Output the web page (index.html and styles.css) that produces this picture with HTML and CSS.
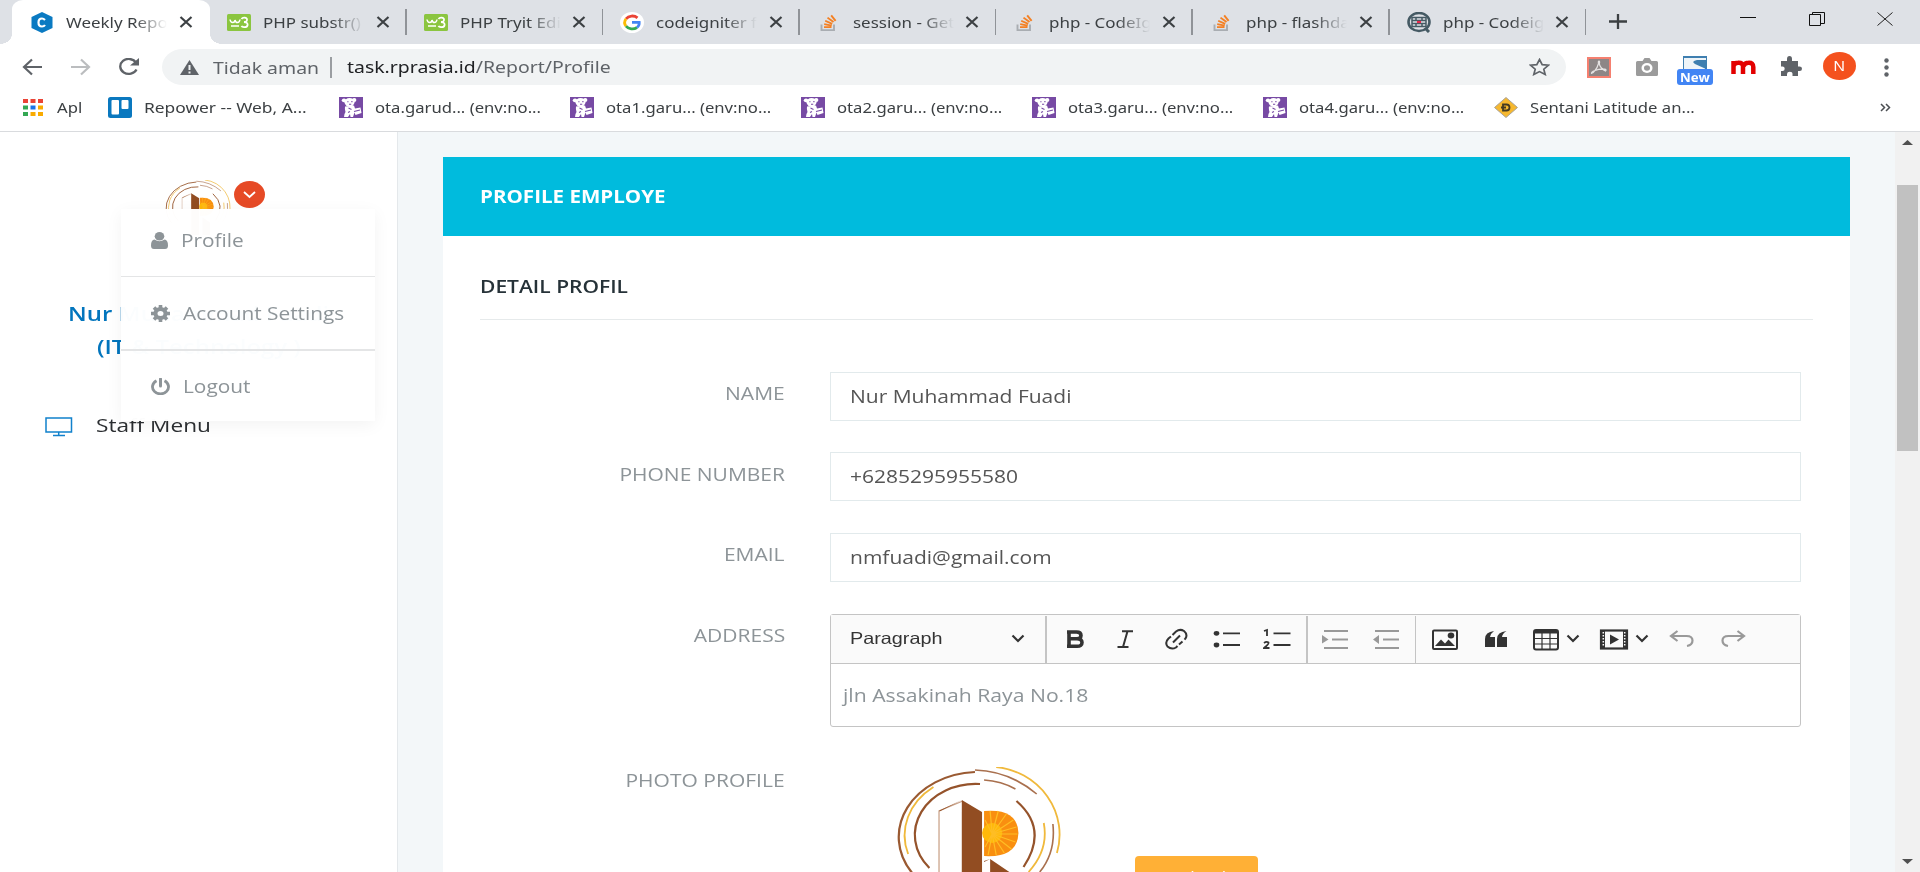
FILE: index.html
```html
<!DOCTYPE html>
<html lang="id">
<head>
<meta charset="utf-8">
<title>Weekly Report</title>
<link rel="stylesheet" href="styles.css">
</head>
<body>
<svg class="defs" width="0" height="0">
  <symbol id="x" viewBox="0 0 14 12" preserveAspectRatio="none"><path d="M1.500 1l11 10M12.500 1l-11 10" stroke="#3c4043" stroke-width="2.200" fill="none"/></symbol>
  <symbol id="w3" viewBox="0 0 24 17" preserveAspectRatio="none"><rect width="24" height="17" rx="1.500" fill="#8bc540"/><path d="M3 5.500q.5 3 2.700 3t2.300-2.500q.5 2.500 2.500 2.500t2.500-3" stroke="#fff" stroke-width="1.500" fill="none"/><path d="M4 12h8" stroke="#fff" stroke-width="1.500"/><path d="M14.500 5Q15.500 3.500 17.500 3.700Q20.300 4 20 6Q19.800 8 17 8Q20.800 8.300 20.600 10.800Q20.300 13.300 17 13.200Q15 13 14.500 11.800" stroke="#fff" stroke-width="1.800" fill="none"/></symbol>
  <symbol id="so" viewBox="0 0 18 18" preserveAspectRatio="none"><path d="M1.500 11v6h12.500v-6" stroke="#a9adb2" stroke-width="1.900" fill="none"/><path d="M4 14h7.500M4.200 10.700l7.500 1.500M5.200 7.200l7 3.200M7.500 3.800l6 4.700M11.200 1.500l4.400 5.800" stroke="#f48024" stroke-width="1.900"/></symbol>
  <symbol id="bear" viewBox="0 0 24 21" preserveAspectRatio="none"><rect width="24" height="21" fill="#774aa4"/><ellipse cx="5" cy="3.300" rx="2.200" ry="1.900" fill="#fff"/><ellipse cx="15.200" cy="3" rx="2.200" ry="1.900" fill="#fff"/><ellipse cx="10.500" cy="5.300" rx="5" ry="4.200" fill="#fff"/><path d="M6 9.500L15 8.500L16 11.500L21.500 10.500L22.500 16L16.500 18L15.500 15.500L14 20H11.500L11 17L9 20H5Q5 17 6.500 15Q5.500 12 6 9.500z" fill="#fff"/><path d="M8.300 4.800h1.200M12.300 4.600h1.200M10 7.300h2.200M9.500 11l3 1.500M15 14.500l6-1.500M9 15.500l2-1" stroke="#774aa4" stroke-width="1.100"/></symbol>
  <symbol id="chev" viewBox="0 0 14 9" preserveAspectRatio="none"><path d="M1.500 1.500L7 7l5.500-5.500" stroke="#333" stroke-width="2.200" fill="none"/></symbol>
  <symbol id="logo" viewBox="0 0 164 136" preserveAspectRatio="none">
    <g fill="none">
      <path d="M16 106A79 65 0 0 1 78 5" stroke="#9a5a32" stroke-width="2.200"/>
      <path d="M12 87A70 60 0 0 1 37 20" stroke="#f0b93c" stroke-width="1.800"/>
      <path d="M33 101A60 51 0 0 1 83 17" stroke="#95532b" stroke-width="2.200"/>
      <path d="M78 3Q112 4 139 27M87 13Q104 14 118 22" stroke="#a9704e" stroke-width="1.600"/>
      <path d="M119 34Q151 62 126 100" stroke="#95532b" stroke-width="2.200"/>
      <path d="M99 0A70 68 0 0 1 159 86" stroke="#f0b93c" stroke-width="1.800"/>
      <path d="M146 56Q151 83 131 105" stroke="#f0b93c" stroke-width="1.800"/>
      <path d="M155 57Q158 85 142 105" stroke="#a9704e" stroke-width="1.600"/>
      <path d="M42.500 136V44L66 34" stroke="#c79f85" stroke-width="1.200"/>
    </g>
    <path d="M65 33L85 45V136H65z" fill="#924d22"/>
    <path d="M65 33L43 44.500v-1z" fill="#924d22"/>
    <path d="M87 44Q120 41 121 66Q120 91 87 89z" fill="#f98f10"/>
    <circle cx="95" cy="66" r="10" fill="#ffb909"/>
    <path d="M95 67L116 53M95 67L119 60M95 67L120 67M95 67L118 75M95 67L114 82M95 67L107 86M95 67L99 88M95 67L91 88M95 67L88 80M95 67L109 47M95 67L101 44M95 67L93 44M95 67L88 53" stroke="#ffbd24" stroke-width="1.200"/>
    <path d="M93 92L112 105V136H93zM93 92l-6 3v-1z" fill="#924d22"/>
  </symbol>
</svg>

<header class="chrome">
  <div class="tabs">
    <div class="tab tab-active">
      <svg class="fav" viewBox="0 0 22 21" preserveAspectRatio="none"><path d="M11 0l10.500 5v11L11 21L.5 16V5z" fill="#0a7ac2"/><path d="M14 8q-1.500-1.500-3-1.500q-3.500 0-3.500 4t3.500 4q2 0 3-1.500" stroke="#fff" stroke-width="2.200" fill="none"/></svg>
      <span class="tab-name"><span class="t">Weekly Report</span></span><svg class="close"><use href="#x"/></svg>
    </div>
    <div class="tab"><svg class="fav"><use href="#w3" y="2" height="17"/></svg><span class="tab-name"><span class="t">PHP substr() F</span></span><svg class="close"><use href="#x"/></svg></div>
    <div class="tab"><svg class="fav"><use href="#w3" y="2" height="17"/></svg><span class="tab-name"><span class="t">PHP Tryit Editor</span></span><svg class="close"><use href="#x"/></svg></div>
    <div class="tab"><svg class="fav" viewBox="0 0 24 21" preserveAspectRatio="none"><ellipse cx="12" cy="10.500" rx="12" ry="10.500" fill="#fff"/><g fill="none" stroke-width="2.800"><path d="M17.500 5.800A7.500 6.300 0 0 0 6 6.800" stroke="#ea4335"/><path d="M6 6.800A7 6.500 0 0 0 6 14.200" stroke="#fbbc05"/><path d="M6 14.200A7.500 6.300 0 0 0 17 15.500" stroke="#34a853"/><path d="M17 15.500Q19.500 13.500 19.200 10.300H12" stroke="#4285f4"/></g></svg><span class="tab-name"><span class="t">codeigniter flash</span></span><svg class="close"><use href="#x"/></svg></div>
    <div class="tab"><svg class="fav"><use href="#so" x="3" y="2" width="18" height="17"/></svg><span class="tab-name"><span class="t">session - Getting</span></span><svg class="close"><use href="#x"/></svg></div>
    <div class="tab"><svg class="fav"><use href="#so" x="3" y="2" width="18" height="17"/></svg><span class="tab-name"><span class="t">php - CodeIgniter</span></span><svg class="close"><use href="#x"/></svg></div>
    <div class="tab"><svg class="fav"><use href="#so" x="3" y="2" width="18" height="17"/></svg><span class="tab-name"><span class="t">php - flashdata</span></span><svg class="close"><use href="#x"/></svg></div>
    <div class="tab"><svg class="fav" viewBox="0 0 24 21" preserveAspectRatio="none"><ellipse cx="12" cy="10" rx="10.500" ry="9" fill="none" stroke="#455a64" stroke-width="2.600"/><path d="M18 16l4 4" stroke="#455a64" stroke-width="3"/><path d="M5 5.500h14v9H5zM5 8.500h14M5 11.500h14M9 5.500v3M15 5.500v3M9 11.500v3M15 11.500v3" stroke="#455a64" stroke-width="1.500" fill="none"/><path d="M10 10h4" stroke="#e8274b" stroke-width="2.200"/></svg><span class="tab-name"><span class="t">php - Codeigniter</span></span><svg class="close"><use href="#x"/></svg></div>
    <svg class="plus" viewBox="0 0 18 15" preserveAspectRatio="none"><path d="M9 0v15M0 7.500h18" stroke="#3c4043" stroke-width="2.300"/></svg>
    <div class="window-buttons">
      <svg width="16" height="14"><path d="M0 5.500h16" stroke="#111"/></svg>
      <svg width="16" height="14"><path d="M.5 2.500h11v11h-11zM3.500 2.500v-2h12v11h-4" fill="none" stroke="#111"/></svg>
      <svg width="16" height="14"><path d="M.5.500l15 13M15.500.500l-15 13" stroke="#222" fill="none"/></svg>
    </div>
  </div>

  <div class="toolbar">
    <div class="nav">
      <svg width="21" height="18" viewBox="0 0 21 18"><path d="M20 9H2M10 1.500L2 9l8 7.500" stroke="#5f6368" stroke-width="2.200" fill="none"/></svg>
      <svg width="21" height="18" viewBox="0 0 21 18"><path d="M1 9h18M11 1.500L19 9l-8 7.500" stroke="#bbbdbf" stroke-width="2.200" fill="none"/></svg>
      <svg width="22" height="18" viewBox="0 0 22 18"><path d="M18 4.500A8.500 7.500 0 1 0 18.500 11.500" stroke="#5f6368" stroke-width="2.300" fill="none"/><path d="M21 0v7.500h-9z" fill="#5f6368"/></svg>
    </div>
    <div class="omnibox">
      <svg width="19" height="15" viewBox="0 0 19 15"><path d="M9.500 0L19 15H0z" fill="#5f6368"/><path d="M9.500 5v5M9.500 11.500v2" stroke="#f1f3f4" stroke-width="2"/></svg>
      <span class="insecure"><span class="t">Tidak aman</span></span>
      <span class="url"><span class="t">task.rprasia.id<i>/Report/Profile</i></span></span>
      <svg class="star" width="21" height="18" viewBox="0 0 21 18"><path d="M10.500 1.500l2.700 5.200 6.300.5-4.700 4 1.400 5.300-5.700-2.900-5.700 2.900 1.400-5.300-4.700-4 6.300-.5z" fill="none" stroke="#5f6368" stroke-width="1.700"/></svg>
    </div>
    <div class="extensions">
      <svg class="e-pdf" width="24" height="21" viewBox="0 0 24 21"><rect x="1" y="1" width="22" height="19" fill="#8d8686" stroke="#f58070" stroke-width="2"/><path d="M4.500 16.500Q4 15 8 13.500Q10.500 10.500 11.500 6.500Q11 4 12 4T12.300 7Q13.500 11.500 18.500 14Q20 12.500 17.500 12.200Q12 12 8 13.500Q6 16.500 4.500 16.500z" stroke="#e5e2e2" stroke-width="1.200" fill="none"/></svg>
      <svg class="e-cam" width="22" height="18" viewBox="0 0 22 18"><path d="M1.500 3h5l2-3h5l2 3h5q1.500 0 1.500 1.500v12q0 1.500-1.500 1.500h-19q-1.500 0-1.500-1.500v-12q0-1.500 1.500-1.500z" fill="#9b9b9b"/><ellipse cx="11" cy="10" rx="5.500" ry="5" fill="#fff"/><ellipse cx="11" cy="10" rx="3" ry="2.700" fill="#9b9b9b"/></svg>
      <div class="e-new"><svg width="24" height="14" viewBox="0 0 24 14"><rect width="24" height="14" fill="#3f7fb0"/><path d="M1 2H23V4H14Q8 5 12 8L22 12.500V14H1z" fill="#eef4f8"/><path d="M10 6Q16 4 23 4.500V11Q20 8 16 7.500Q12 7.500 10 6z" fill="#3f7fb0"/></svg><span><b>New</b></span></div>
      <svg class="e-m" width="25" height="14" viewBox="0 0 25 14"><path d="M2.500 14V1M2.500 14V6Q3.500 2.800 7 2.800Q11.500 2.500 12 6V14M12.500 6Q14 2.800 17.500 2.800Q22.300 2.500 22.300 7V14" stroke="#e30000" stroke-width="4.500" fill="none"/></svg>
      <svg class="e-puz" width="22" height="20" viewBox="0 0 22 20"><path d="M1 5h6V3q0-3 2.500-3T12 3v2h6v5.500h1.500q2.500 0 2.500 2.300T19.500 15H18v5h-5.500v-2q0-2.200-2.700-2.200T7 18v2H1v-5h1.500q2.200 0 2.200-2.200T2.500 10.500H1z" fill="#5f6368"/></svg>
      <div class="avatar"><span>N</span></div>
      <svg class="dots" width="5" height="19" viewBox="0 0 5 19"><circle cx="2.500" cy="2.500" r="2.200" fill="#5f6368"/><circle cx="2.500" cy="9.500" r="2.200" fill="#5f6368"/><circle cx="2.500" cy="16.500" r="2.200" fill="#5f6368"/></svg>
    </div>
  </div>

  <div class="bookmarks">
    <div class="bm bm-apps"><svg width="20" height="17" viewBox="0 0 20 17"><g stroke-width="4"><path d="M0 2h5" stroke="#ea4335"/><path d="M7.500 2h5M15 2h5" stroke="#ea4335"/><path d="M0 8.500h5" stroke="#34a853"/><path d="M7.500 8.500h5" stroke="#1a73e8"/><path d="M15 8.500h5" stroke="#f9ab00"/><path d="M0 15h5" stroke="#34a853"/><path d="M7.500 15h5M15 15h5" stroke="#f9ab00"/></g></svg><span class="t">Apl</span></div>
    <div class="bm bm-trello"><svg width="24" height="21" viewBox="0 0 24 21"><rect width="24" height="21" rx="2.500" fill="#0a78bf"/><rect x="3.500" y="3" width="7.500" height="14.500" rx="1" fill="#fff"/><rect x="13.500" y="3" width="7" height="9" rx="1" fill="#fff"/></svg><span class="t">Repower -- Web, A...</span></div>
    <div class="bm"><svg width="24" height="21"><use href="#bear"/></svg><span class="t">ota.garud... (env:no...</span></div>
    <div class="bm"><svg width="24" height="21"><use href="#bear"/></svg><span class="t">ota1.garu... (env:no...</span></div>
    <div class="bm"><svg width="24" height="21"><use href="#bear"/></svg><span class="t">ota2.garu... (env:no...</span></div>
    <div class="bm"><svg width="24" height="21"><use href="#bear"/></svg><span class="t">ota3.garu... (env:no...</span></div>
    <div class="bm"><svg width="24" height="21"><use href="#bear"/></svg><span class="t">ota4.garu... (env:no...</span></div>
    <div class="bm"><svg width="24" height="21" viewBox="0 0 24 21"><path d="M12 .5L23.500 10.500L12 20.500L.5 10.500z" fill="#f6b82f" stroke="#a9a39a"/><path d="M9 7.500h3.500q3 0 3 3T12.500 13.500H9zM7 10.500h5" fill="none" stroke="#443a22" stroke-width="1.800"/></svg><span class="t">Sentani Latitude an...</span></div>
    <svg class="more" width="11" height="9" viewBox="0 0 11 9"><path d="M1 1l3.500 3.500L1 8M6 1l3.500 3.500L6 8" fill="none" stroke="#4c4f53" stroke-width="1.500"/></svg>
  </div>
</header>

<div class="page">
  <aside class="sidebar">
    <div class="user">
      <svg class="user-photo" width="66" height="55"><use href="#logo"/></svg>
      <span class="badge"><svg width="13" height="8" viewBox="0 0 13 8"><path d="M1 1l5.500 5L12 1" stroke="#fff" stroke-width="1.800" fill="none"/></svg></span>
      <ul class="menu">
        <li><svg width="17" height="17" viewBox="0 0 17 17"><ellipse cx="8.500" cy="4.300" rx="4.800" ry="4.300" fill="#8d9498"/><path d="M3.500 7.500Q0 8 0 13.500Q0 17 3 17h11q3 0 3-3.500q0-5.500-3.500-6q-5 3.500-10 0z" fill="#8d9498"/></svg><span class="t">Profile</span></li>
        <li><svg width="19" height="17" viewBox="0 0 19 17"><ellipse cx="9.500" cy="8.500" rx="5" ry="4.500" fill="none" stroke="#8d9498" stroke-width="4"/><path d="M9.500 0v4M9.500 13v4M0 8.500h4.500M14.500 8.500H19M3 2.500l3 3M13 11.500l3 3M16 2.500l-3 3M6 11.500l-3 3" stroke="#8d9498" stroke-width="3.600"/></svg><span class="t">Account Settings</span></li>
        <li><svg width="19" height="17" viewBox="0 0 19 17"><path d="M5.500 2.800A8 7 0 1 0 13.500 2.800" fill="none" stroke="#8d9498" stroke-width="2.800"/><path d="M9.500 1v7" stroke="#8d9498" stroke-width="3" stroke-linecap="round"/></svg><span class="t">Logout</span></li>
      </ul>
    </div>
    <div class="user-name"><span class="t">Nur Muhammad Fuadi</span><span class="t">(IT &amp; Technology )</span></div>
    <div class="side-item"><svg width="28" height="20" viewBox="0 0 28 20"><path d="M1 1h25.500v14H1zM13.700 15v3.500M8 18.500h12" fill="none" stroke="#1181cc" stroke-width="1.500"/></svg><span class="t">Staff Menu</span></div>
  </aside>

  <main class="content">
    <section class="card">
      <h1><span class="t">PROFILE EMPLOYE</span></h1>
      <div class="card-body">
        <h2><span class="t">DETAIL PROFIL</span></h2>
        <div class="row"><label><span class="t">NAME</span></label><div class="input"><span class="t">Nur Muhammad Fuadi</span></div></div>
        <div class="row"><label><span class="t">PHONE NUMBER</span></label><div class="input"><span class="t">+6285295955580</span></div></div>
        <div class="row"><label><span class="t">EMAIL</span></label><div class="input"><span class="t">nmfuadi@gmail.com</span></div></div>
        <div class="row row-editor"><label><span class="t">ADDRESS</span></label>
          <div class="editor">
            <div class="ed-tools">
              <div class="group g-head"><span class="t">Paragraph</span><svg width="14" height="9"><use href="#chev"/></svg></div>
              <div class="group g-text">
                <svg width="28" height="24" viewBox="0 0 28 24"><path d="M6 5h9.500q4.500 0 4.500 3.400t-4.500 3.400h-7.500h8q5 0 5 3.800t-5 3.700H6M8 5v14" fill="none" stroke="#333" stroke-width="3.600"/></svg>
                <svg width="28" height="24" viewBox="0 0 28 24"><path d="M11 4.200h11M6.500 20h11M16.500 4.200L12 20" stroke="#333" stroke-width="2"/></svg>
                <svg width="28" height="24" viewBox="0 0 28 24"><path d="M10.500 8L14 4.500Q18 1.500 22 4Q26 7.500 23.500 11.500L22.500 12.700M9 9.500L6.500 11.500Q2.500 15.500 5.500 19.500Q9.500 23 14 20.500L15.500 19M17 17.500L20.500 14.500M11 15.500L18 8.500" fill="none" stroke="#333" stroke-width="2"/></svg>
                <svg width="28" height="24" viewBox="0 0 28 24"><ellipse cx="3.500" cy="6.300" rx="2.800" ry="2.400" fill="#333"/><ellipse cx="3.500" cy="18" rx="2.800" ry="2.400" fill="#333"/><path d="M10 6.300h17M10 18h17" stroke="#333" stroke-width="1.800"/></svg>
                <svg width="28" height="24" viewBox="0 0 28 24"><path d="M1 4l3-1v6M10.500 6.300h17M10.500 18h17" fill="none" stroke="#333" stroke-width="1.800"/><path d="M1 16q2.500-2 4.500-.5q.5 1.500-4.500 5.500h5.500" fill="none" stroke="#333" stroke-width="1.800"/></svg>
              </div>
              <div class="group g-indent">
                <svg width="28" height="24" viewBox="0 0 28 24"><path d="M3 4h24M11 12.500h16M3 21h24" stroke="#999" stroke-width="2.100"/><path d="M1 8L7.500 12.500L1 16.500z" fill="#999"/></svg>
                <svg width="28" height="24" viewBox="0 0 28 24"><path d="M3 4h24M11 12.500h16M3 21h24" stroke="#999" stroke-width="2.100"/><path d="M7 8L1 12.500l6 4.500z" fill="#999"/></svg>
              </div>
              <div class="group g-insert">
                <svg width="28" height="24" viewBox="0 0 28 24"><rect x="2" y="3.500" width="24" height="18.500" rx="1" fill="none" stroke="#333" stroke-width="2"/><path d="M4 19l6-6.500 4 4 3.500-4L24 19z" fill="#333"/><ellipse cx="20" cy="8.500" rx="3.300" ry="3" fill="#333"/></svg>
                <svg width="28" height="24" viewBox="0 0 28 24"><path d="M3 20V12Q3 5 12 4Q8.500 6.500 8 10h5v10zM15 20V12Q15 5 24.500 4Q20.500 6.500 20 10h5v10z" fill="#333"/></svg>
                <svg width="28" height="24" viewBox="0 0 28 24"><rect x="2" y="3" width="24" height="19.500" rx="2" fill="none" stroke="#333" stroke-width="2"/><path d="M2 3.500h24v3H2z" fill="#333"/><path d="M2 11.500h24M2 17h24M10 6v16M18 6v16" stroke="#333" stroke-width="1.200"/></svg>
                <svg class="sm" width="14" height="9"><use href="#chev"/></svg>
                <svg width="30" height="24" viewBox="0 0 30 24"><rect x="2" y="3.500" width="26" height="18" fill="none" stroke="#333" stroke-width="2.200"/><path d="M4.500 4v18M25.500 4v18" stroke="#333" stroke-width="3"/><path d="M4.300 5v15M25.700 5v15" stroke="#fafafa" stroke-width="1.500" stroke-dasharray="1.500 1.500"/><path d="M11 7.500l9 5-9 5z" fill="#333"/></svg>
                <svg class="sm" width="14" height="9"><use href="#chev"/></svg>
                <svg width="28" height="24" viewBox="0 0 28 24"><path d="M9.500 4L3 9l6.500 5M3.500 9h15q6 0 6 4.500t-5.500 5.500" fill="none" stroke="#999" stroke-width="2.200"/></svg>
                <svg width="28" height="24" viewBox="0 0 28 24"><path d="M18.500 4L25 9l-6.500 5M24.500 9h-15q-6 0-6 4.500t5.500 5.500" fill="none" stroke="#999" stroke-width="2.200"/></svg>
              </div>
            </div>
            <div class="ed-body"><span class="t">jln Assakinah Raya No.18</span></div>
          </div>
        </div>
        <div class="row row-photo"><label><span class="t">PHOTO PROFILE</span></label>
          <svg class="photo" width="166" height="136"><use href="#logo"/></svg>
          <div class="upload"><span class="t">Upload</span></div>
        </div>
      </div>
    </section>
  </main>

  <div class="scrollbar">
    <svg width="11" height="6" viewBox="0 0 11 6"><path d="M5.500 0L11 5H0z" fill="#505050"/></svg>
    <div class="thumb"></div>
    <svg class="down" width="11" height="6" viewBox="0 0 11 6"><path d="M5.500 5L11 0H0z" fill="#505050"/></svg>
  </div>
</div>
</body>
</html>
```

FILE: styles.css
```css
* { box-sizing: border-box; }
body { margin: 0; width: 1920px; height: 872px; overflow: hidden; background: #fff; font-family: "Open Sans", sans-serif; color: #3c4043; }
svg { display: block; flex: none; }
.defs { position: absolute; }
.t { display: inline-block; white-space: nowrap; transform: scaleX(1.19); transform-origin: left center; }

.chrome { height: 132px; border-bottom: 1px solid #d9dbde; font-family: "Noto Sans", sans-serif; }
.tabs { display: flex; align-items: stretch; height: 44px; padding-left: 12px; background: #dee1e6; }
.tab { position: relative; display: flex; align-items: center; width: 196.6px; padding: 0 17px 0 17px; }
.tab:not(.tab-active)::after { content: ""; position: absolute; right: 0; top: 9px; width: 1.5px; height: 26px; background: #909398; }
.tab-active { width: 198px; padding: 0 17px 0 19px; background: #fff; border-radius: 11px 11px 0 0 / 9px 9px 0 0; }
.tab-active::before, .tab-active::after { content: ""; position: absolute; bottom: 0; width: 12px; height: 10px; }
.tab-active::before { left: -12px; background: radial-gradient(ellipse 12px 10px at 0 0, #dee1e6 98%, #fff); }
.tab-active::after { right: -12px; background: radial-gradient(ellipse 12px 10px at 100% 0, #dee1e6 98%, #fff); }
.fav { width: 24px; height: 21px; }
.tab-active .fav { width: 22px; }
.tab-name { flex: 1; margin-left: 12px; margin-top: -1px; overflow: hidden; font-size: 15px; line-height: 22px; -webkit-mask-image: linear-gradient(90deg, #000 68px, transparent 101px); mask-image: linear-gradient(90deg, #000 68px, transparent 101px); }
.tab-active .tab-name { margin-left: 13px; }
.tab-name .t { transform: scaleX(1.13); }
.close { width: 14px; height: 12px; }
.plus { width: 18px; height: 15px; margin: 14px 0 0 23px; }
.window-buttons { display: flex; gap: 52.500px; margin: 12px 27px 0 auto; }

.toolbar { display: flex; height: 46px; padding-top: 5px; }
.nav { display: flex; align-items: center; gap: 27px; width: 162px; height: 36px; padding-left: 22px; }
.omnibox { display: flex; align-items: center; width: 1404px; height: 36px; padding: 0 16px 0 18px; background: #f1f3f4; border-radius: 21px / 18px; font-size: 17px; line-height: 24px; color: #5f6368; }
.omnibox .t { transform: scaleX(1.143); }
.insecure { width: 119px; margin-left: 14px; border-right: 2px solid #9a9da1; line-height: 21px; }
.url { margin-left: 15px; color: #202124; }
.url i { font-style: normal; color: #5f6368; }
.star { margin-left: auto; }
.extensions { display: flex; align-items: center; height: 36px; }
.e-pdf { margin-left: 21px; }
.e-cam { margin-left: 25px; }
.e-new { position: relative; width: 36px; height: 36px; margin-left: 19px; padding: 7px 0 0 6px; }
.e-new span { position: absolute; left: 0; top: 20px; width: 36px; height: 16px; border-radius: 3px; background: #4285f4; color: #fff; font-size: 11.500px; line-height: 17px; text-align: center; }
.e-new b { display: inline-block; transform: scaleX(1.15); }
.e-m { margin-left: 18px; }
.e-puz { margin-left: 24px; margin-top: -3px; }
.avatar { width: 33px; height: 28px; margin: -2px 0 0 21px; border-radius: 50%; background: #f4511e; color: #fff; font-size: 14px; line-height: 28px; text-align: center; }
.avatar span { display: inline-block; transform: scaleX(1.12); }
.dots { margin-left: 28px; }

.bookmarks { display: flex; align-items: center; height: 35px; padding-left: 23px; font-size: 14px; }
.bm { display: flex; align-items: center; gap: 12px; width: 231px; }
.bm-apps { width: 85px; gap: 14px; }
.bm-trello { gap: 12px; }
.bm-trello .t { transform: scaleX(1.24); }
.more { margin-left: auto; margin-right: 29px; }

.page { display: flex; height: 740px; background: #f3f7f9; }
.sidebar { width: 398px; background: #fff; border-right: 1px solid #e4e8eb; }
.user { position: relative; display: flex; height: 166px; padding: 48px 0 0 165px; }
.badge { display: flex; align-items: center; justify-content: center; width: 31px; height: 27px; margin: 1px 0 0 3px; border-radius: 50%; background: #e64a26; }
.menu { position: absolute; z-index: 2; left: 121px; top: 77px; width: 254px; height: 212px; margin: 0; padding: 0; list-style: none; background: rgba(255,255,255,.985); box-shadow: 0 4px 16px rgba(0,0,0,.05); font-size: 17.500px; color: #8d9498; }
.menu li { display: flex; align-items: center; gap: 13px; height: 74px; padding-left: 30px; border-bottom: 2px solid #e4e5e6; }
.menu li:first-child { height: 68px; padding-bottom: 4px; border-bottom-width: 1px; }
.menu li:last-child { height: 70px; border: 0; }
.menu li:first-child .t { margin-top: -2px; }
.user-name { display: flex; flex-direction: column; align-items: center; font-size: 19px; line-height: 33px; font-weight: 600; color: #0275bd; }
.user-name .t { transform: scaleX(1.26); transform-origin: center; }
.side-item { display: flex; align-items: center; gap: 23px; height: 30px; margin-top: 48px; padding-left: 45px; font-size: 19px; color: #2b2e31; }
.side-item .t { margin-top: -5px; }

.content { width: 1497px; padding: 25px 45px 0; height: 740px; overflow: hidden; }
.card { width: 1407px; height: 760px; background: #fff; }
h1 { height: 79px; margin: 0; padding-left: 37px; background: #00bbdd; color: #fff; font-size: 17.500px; font-weight: 700; line-height: 78px; }
h1 .t { transform: scaleX(1.175); }
.card-body { padding: 0 37px; }
h2 { height: 84px; margin: 0 0 52px; border-bottom: 1px solid #e6eaeb; font-size: 17.500px; font-weight: 600; line-height: 101px; color: #263238; }
h2 .t { transform: scaleX(1.2); }
.row { display: flex; height: 80.6px; }
.row:nth-of-type(2) .input { margin-top: -1px; }
label { width: 305px; margin-right: 45px; padding-top: 9px; text-align: right; font-size: 17.500px; line-height: 25px; color: #8d9498; }
label .t { transform-origin: right center; transform: scaleX(1.2); }
.input { width: 971px; height: 49px; padding-left: 19px; border: 1px solid #e2eaec; font-size: 17.500px; line-height: 47px; color: #555; }
.input .t { transform: scaleX(1.2); }
.row-editor { height: 145px; }
.editor { width: 971px; height: 113px; border: 1px solid #c4c4c4; border-radius: 3px; }
.ed-tools { display: flex; height: 49px; background: #fafafa; border-bottom: 1px solid #c4c4c4; padding-top: 1px; }
.group { display: flex; align-items: center; border-right: 2px solid #c4c4c4; }
.group svg { margin-top: -1px; }
.g-head { justify-content: space-between; width: 216px; padding: 0 20px 0 19px; font-family: "Liberation Sans", sans-serif; font-size: 16.500px; color: #333; }
.g-head .t { margin-top: -1px; transform: scaleX(1.2); }
.g-text { width: 261px; gap: 22.700px; padding-left: 13.5px; }
.g-indent { width: 108px; gap: 23px; padding-left: 13px; border-right-width: 1px; }
.g-insert { flex: 1; gap: 22.500px; padding-left: 15px; border: 0; }
.g-insert .sm { margin-left: -17px; margin-right: -3px; }
.ed-body { padding-left: 12px; font-size: 17.500px; line-height: 62px; color: #8d9498; }
.ed-body .t { transform: scaleX(1.21); }
.photo { margin: 8px 0 0 66px; }
.upload { width: 123px; height: 46px; margin: 97px 0 0 73px; border-radius: 4px; background: #ffb036; color: #fff; font-size: 15px; line-height: 40px; text-align: center; }
.upload .t { transform-origin: center; }

.scrollbar { display: flex; flex-direction: column; align-items: center; width: 25px; padding: 8px 0 7px; background: #f1f1f1; }
.thumb { width: 21px; height: 266px; margin-top: 39px; background: #c1c1c1; }
.down { margin-top: auto; }
```
